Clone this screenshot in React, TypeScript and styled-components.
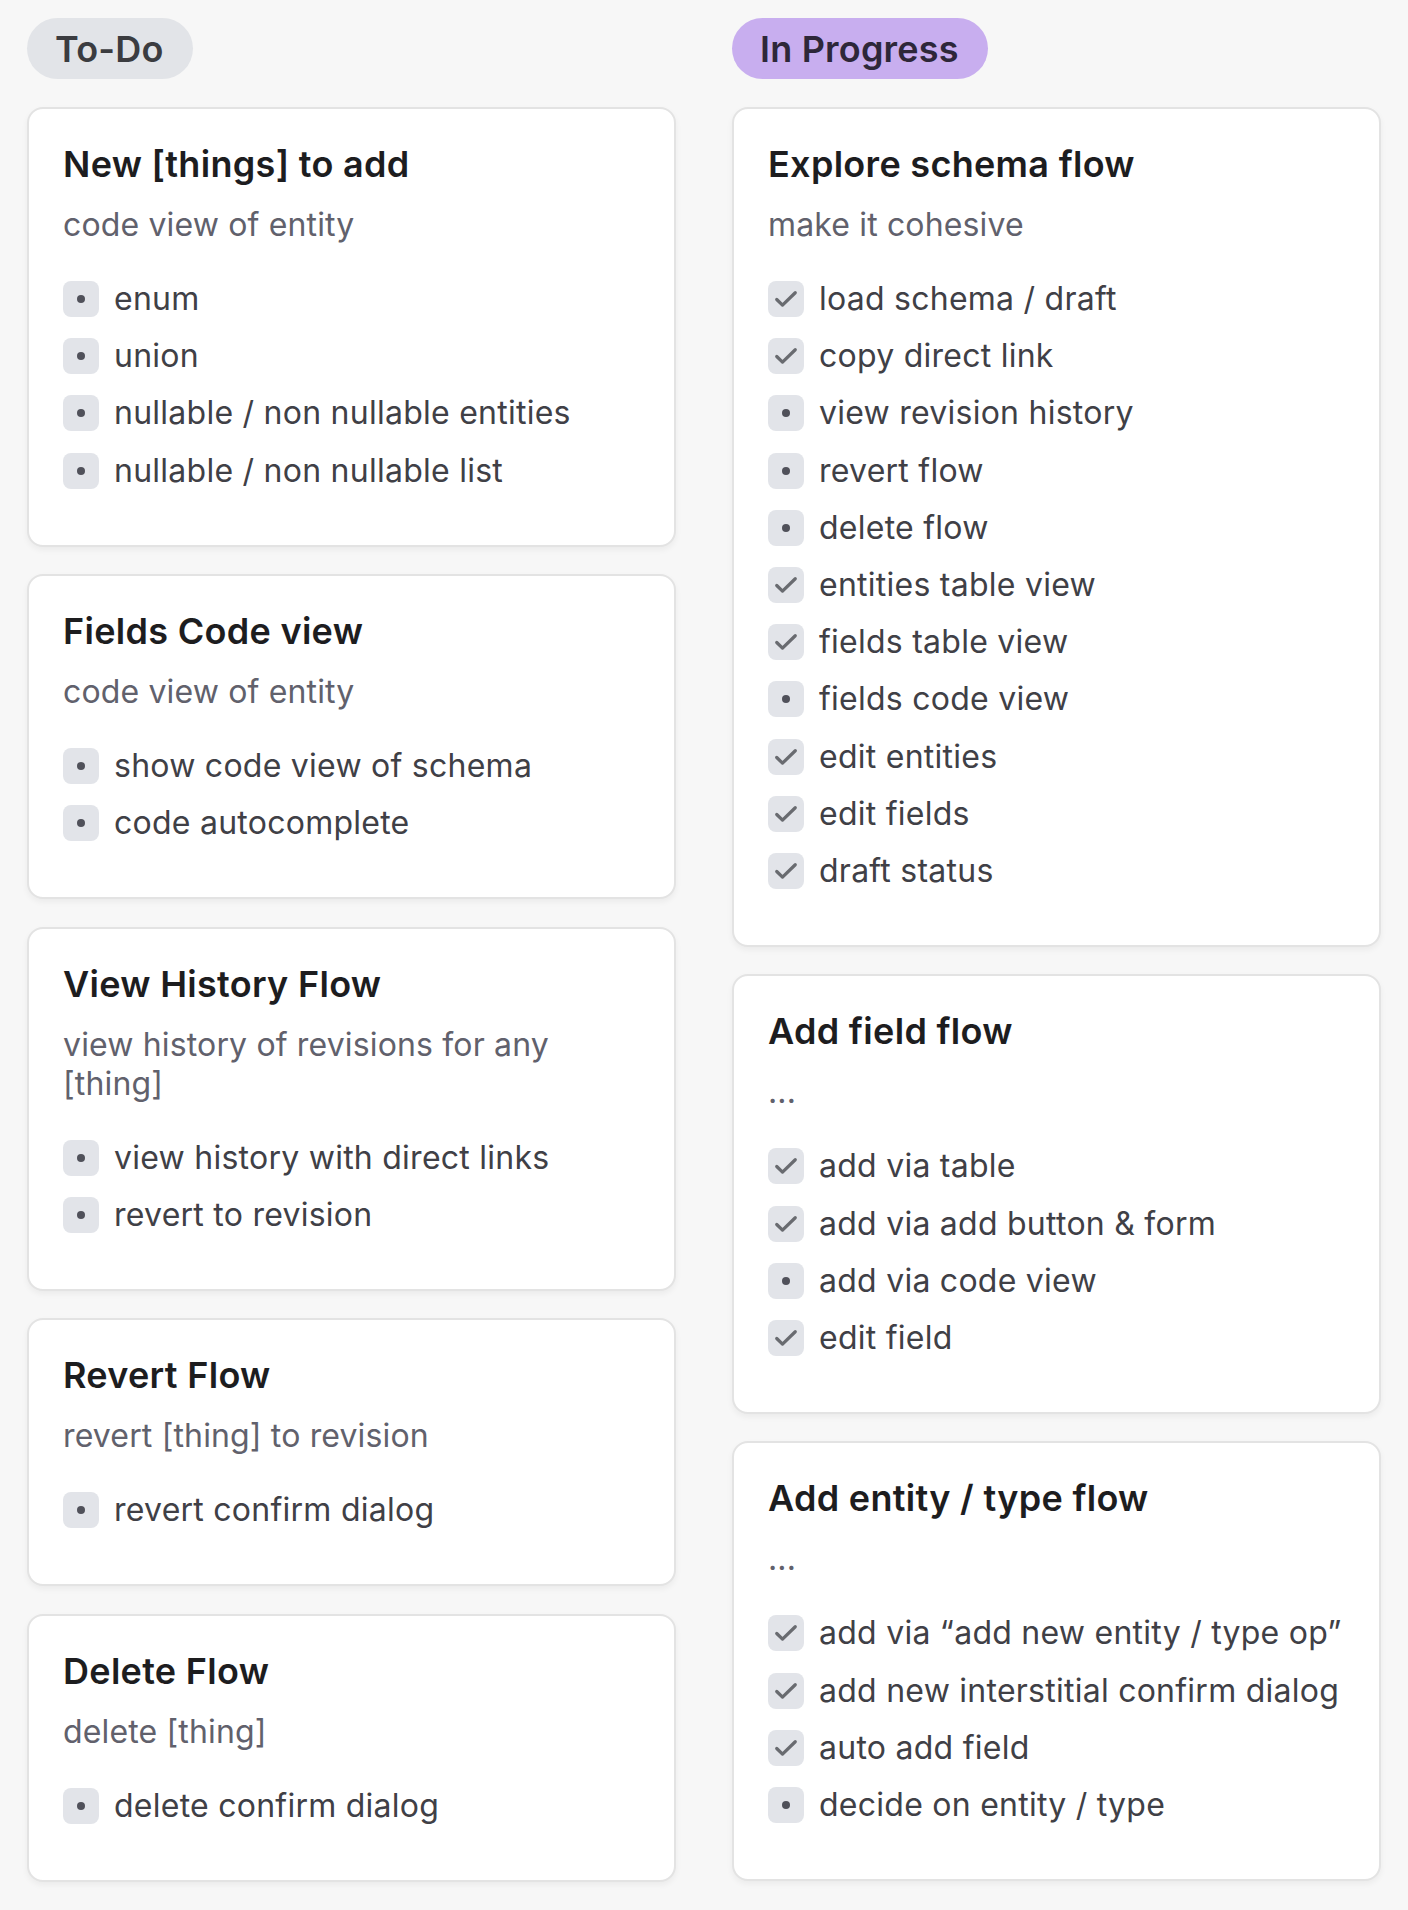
import React from 'react';
import styled, { createGlobalStyle } from 'styled-components';

const GlobalStyle = createGlobalStyle`
  * {
    box-sizing: border-box;
  }
  body {
    margin: 0;
    background: #f7f7f7;
    font-family: Inter, "Noto Sans", "Liberation Sans", sans-serif;
    -webkit-font-smoothing: antialiased;
  }
`;

const Board = styled.div`
  display: grid;
  grid-template-columns: 649px 649px;
  column-gap: 56px;
  padding: 18px 27px 30px 27px;
  align-items: start;
`;

const Column = styled.section`
  display: flex;
  flex-direction: column;
  align-items: flex-start;
`;

const Pill = styled.div<{ tone: 'gray' | 'purple' }>`
  height: 61px;
  display: flex;
  align-items: center;
  padding: 0 29px 0 28px;
  border-radius: 31px;
  font-size: 36px;
  font-weight: 600;
  letter-spacing: 0.2px;
  background: ${(p) => (p.tone === 'purple' ? '#c8aeef' : '#e2e4e8')};
  color: ${(p) => (p.tone === 'purple' ? '#2e2739' : '#3b3c40')};
  margin-bottom: 28px;
`;

const CardList = styled.div`
  display: flex;
  flex-direction: column;
  gap: 27.5px;
  width: 100%;
`;

const Card = styled.article`
  background: #ffffff;
  border: 2px solid #e3e3e3;
  border-radius: 16px;
  box-shadow: 0 3px 6px rgba(0, 0, 0, 0.05);
  padding: 32px 34px 52px;
`;

const Title = styled.h2`
  margin: 0;
  font-size: 36px;
  line-height: 46px;
  font-weight: 600;
  letter-spacing: 0.3px;
  color: #1d1d1f;
`;

const Subtitle = styled.p`
  margin: 18px 0 0;
  font-size: 32px;
  line-height: 39px;
  letter-spacing: 0.15px;
  color: #61616c;
`;

const Items = styled.ul`
  list-style: none;
  margin: 33px 0 0;
  padding: 0;
  display: flex;
  flex-direction: column;
  gap: 13.2px;
`;

const Item = styled.li`
  display: flex;
  align-items: center;
  gap: 15px;
  height: 44px;
  font-size: 32px;
  line-height: 44px;
  letter-spacing: 0.25px;
  color: #404046;
  white-space: nowrap;
`;

const Box = styled.span`
  flex: none;
  width: 36px;
  height: 36px;
  border-radius: 8px;
  background: #e2e4e9;
  display: flex;
  align-items: center;
  justify-content: center;
`;

const Dot = styled.span`
  width: 8px;
  height: 8px;
  border-radius: 50%;
  background: #50515a;
`;

type Task = { label: string; done?: boolean };
type CardData = { title: string; subtitle: string; items: Task[] };

const todo: CardData[] = [
  {
    title: 'New [things] to add',
    subtitle: 'code view of entity',
    items: [
      { label: 'enum' },
      { label: 'union' },
      { label: 'nullable / non nullable entities' },
      { label: 'nullable / non nullable list' },
    ],
  },
  {
    title: 'Fields Code view',
    subtitle: 'code view of entity',
    items: [{ label: 'show code view of schema' }, { label: 'code autocomplete' }],
  },
  {
    title: 'View History Flow',
    subtitle: 'view history of revisions for any [thing]',
    items: [{ label: 'view history with direct links' }, { label: 'revert to revision' }],
  },
  {
    title: 'Revert Flow',
    subtitle: 'revert [thing] to revision',
    items: [{ label: 'revert confirm dialog' }],
  },
  {
    title: 'Delete Flow',
    subtitle: 'delete [thing]',
    items: [{ label: 'delete confirm dialog' }],
  },
];

const inProgress: CardData[] = [
  {
    title: 'Explore schema flow',
    subtitle: 'make it cohesive',
    items: [
      { label: 'load schema / draft', done: true },
      { label: 'copy direct link', done: true },
      { label: 'view revision history' },
      { label: 'revert flow' },
      { label: 'delete flow' },
      { label: 'entities table view', done: true },
      { label: 'fields table view', done: true },
      { label: 'fields code view' },
      { label: 'edit entities', done: true },
      { label: 'edit fields', done: true },
      { label: 'draft status', done: true },
    ],
  },
  {
    title: 'Add field flow',
    subtitle: '...',
    items: [
      { label: 'add via table', done: true },
      { label: 'add via add button & form', done: true },
      { label: 'add via code view' },
      { label: 'edit field', done: true },
    ],
  },
  {
    title: 'Add entity / type flow',
    subtitle: '...',
    items: [
      { label: 'add via \u201cadd new entity / type op\u201d', done: true },
      { label: 'add new interstitial confirm dialog', done: true },
      { label: 'auto add field', done: true },
      { label: 'decide on entity / type' },
    ],
  },
];

const CheckMark = () => (
  <svg width="30" height="30" viewBox="0 0 24 24" fill="none">
    <path
      d="M4.6 12.4l4.6 4.5L19.4 7"
      stroke="#696b70"
      strokeWidth="2.6"
      strokeLinecap="round"
      strokeLinejoin="round"
    />
  </svg>
);

const TaskCard = ({ card }: { card: CardData }) => (
  <Card>
    <Title>{card.title}</Title>
    <Subtitle>{card.subtitle}</Subtitle>
    <Items>
      {card.items.map((task) => (
        <Item key={task.label}>
          <Box>{task.done ? <CheckMark /> : <Dot />}</Box>
          {task.label}
        </Item>
      ))}
    </Items>
  </Card>
);

const App = () => (
  <>
    <GlobalStyle />
    <Board>
      <Column>
        <Pill tone="gray">To-Do</Pill>
        <CardList>
          {todo.map((c) => (
            <TaskCard key={c.title} card={c} />
          ))}
        </CardList>
      </Column>
      <Column>
        <Pill tone="purple">In Progress</Pill>
        <CardList>
          {inProgress.map((c) => (
            <TaskCard key={c.title} card={c} />
          ))}
        </CardList>
      </Column>
    </Board>
  </>
);

export default App;
